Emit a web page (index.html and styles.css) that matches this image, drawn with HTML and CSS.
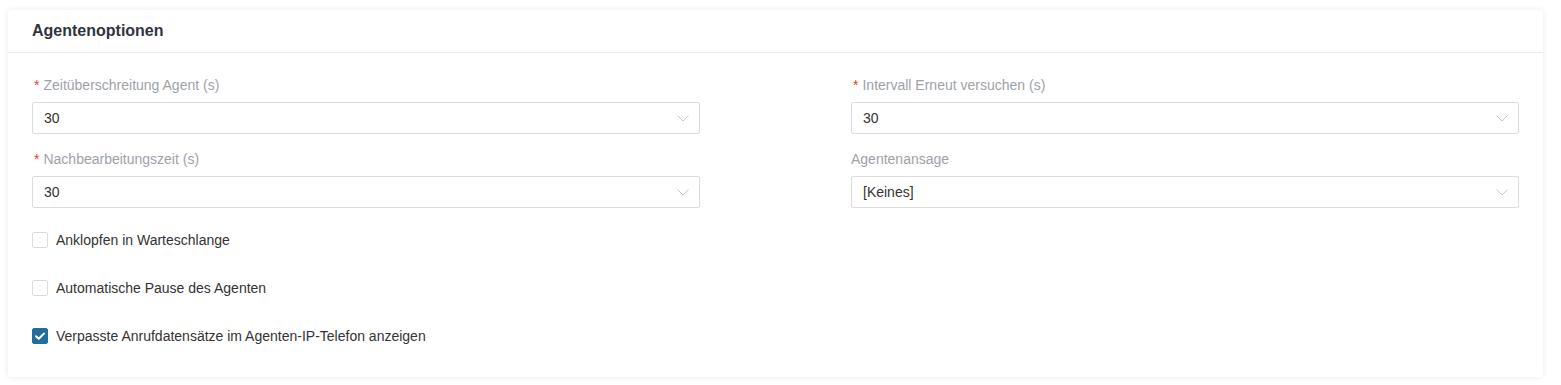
FILE: index.html
```html
<!DOCTYPE html>
<html lang="de">
<head>
<meta charset="utf-8">
<title>Agentenoptionen</title>
<link rel="stylesheet" href="styles.css">
</head>
<body>
<div class="card">
  <div class="card-header">Agentenoptionen</div>
  <div class="card-body">
    <div class="grid">
      <div class="field">
        <label class="label"><span class="req">*</span>Zeitüberschreitung Agent (s)</label>
        <div class="select"><span>30</span><svg class="chev" width="12" height="7" viewBox="0 0 12 7"><path d="M0.5 0.5 L6 6 L11.5 0.5" fill="none" stroke="#c8c8c8" stroke-width="1"/></svg></div>
      </div>
      <div class="field">
        <label class="label"><span class="req">*</span>Intervall Erneut versuchen (s)</label>
        <div class="select"><span>30</span><svg class="chev" width="12" height="7" viewBox="0 0 12 7"><path d="M0.5 0.5 L6 6 L11.5 0.5" fill="none" stroke="#c8c8c8" stroke-width="1"/></svg></div>
      </div>
      <div class="field">
        <label class="label"><span class="req">*</span>Nachbearbeitungszeit (s)</label>
        <div class="select"><span>30</span><svg class="chev" width="12" height="7" viewBox="0 0 12 7"><path d="M0.5 0.5 L6 6 L11.5 0.5" fill="none" stroke="#c8c8c8" stroke-width="1"/></svg></div>
      </div>
      <div class="field">
        <label class="label">Agentenansage</label>
        <div class="select"><span>[Keines]</span><svg class="chev" width="12" height="7" viewBox="0 0 12 7"><path d="M0.5 0.5 L6 6 L11.5 0.5" fill="none" stroke="#c8c8c8" stroke-width="1"/></svg></div>
      </div>
    </div>
    <div class="checks">
      <div class="check-row"><span class="box"></span><span>Anklopfen in Warteschlange</span></div>
      <div class="check-row"><span class="box"></span><span>Automatische Pause des Agenten</span></div>
      <div class="check-row"><span class="box checked"><svg width="16" height="16" viewBox="0 0 16 16"><path d="M4 8.2 L6.8 10.8 L12 5.5" fill="none" stroke="#fff" stroke-width="2" stroke-linecap="round" stroke-linejoin="round"/></svg></span><span>Verpasste Anrufdatensätze im Agenten-IP-Telefon anzeigen</span></div>
    </div>
  </div>
</div>
</body>
</html>
```

FILE: styles.css
```css
html, body {
  margin: 0;
  padding: 0;
  background: #ffffff;
}
body {
  padding: 10px 18px 8px 8px;
  font-family: "Liberation Sans", Arial, sans-serif;
  font-size: 14px;
  color: #333;
}
.card {
  background: #fff;
  border-radius: 3px;
  box-shadow: 0 0 6px rgba(0, 0, 0, 0.09);
}
.card-header {
  height: 42px;
  line-height: 42px;
  padding: 0 24px;
  font-size: 16px;
  font-weight: bold;
  color: #2f3441;
  border-bottom: 1px solid #ececec;
}
.card-body {
  padding: 24px 24px 17px 24px;
}
.grid {
  display: grid;
  grid-template-columns: 1fr 1fr;
  column-gap: 151px;
  row-gap: 17px;
}
.field {
  display: flex;
  flex-direction: column;
}
.label {
  line-height: 16px;
  font-size: 14px;
  color: #9ea2a9;
  margin-bottom: 9px;
}
.req {
  color: #e0452f;
  margin-left: 2px;
  margin-right: 4px;
}
.select {
  height: 32px;
  box-sizing: border-box;
  border: 1px solid #dcdcdc;
  border-radius: 2px;
  display: flex;
  align-items: center;
  justify-content: space-between;
  padding: 0 10px 0 11px;
  color: #333;
  font-size: 14px;
}
.chev {
  display: block;
}
.checks {
  margin-top: 8px;
  display: flex;
  flex-direction: column;
}
.check-row {
  height: 48px;
  display: flex;
  align-items: center;
  gap: 8px;
  color: #333;
  font-size: 14px;
}
.box {
  width: 16px;
  height: 16px;
  box-sizing: border-box;
  border: 1px solid #dcdcdc;
  border-radius: 2px;
  background: #fff;
  display: block;
}
.box.checked {
  background: #236d9c;
  border-color: #236d9c;
  position: relative;
}
.box.checked svg {
  position: absolute;
  left: -1px;
  top: -1px;
}
```
